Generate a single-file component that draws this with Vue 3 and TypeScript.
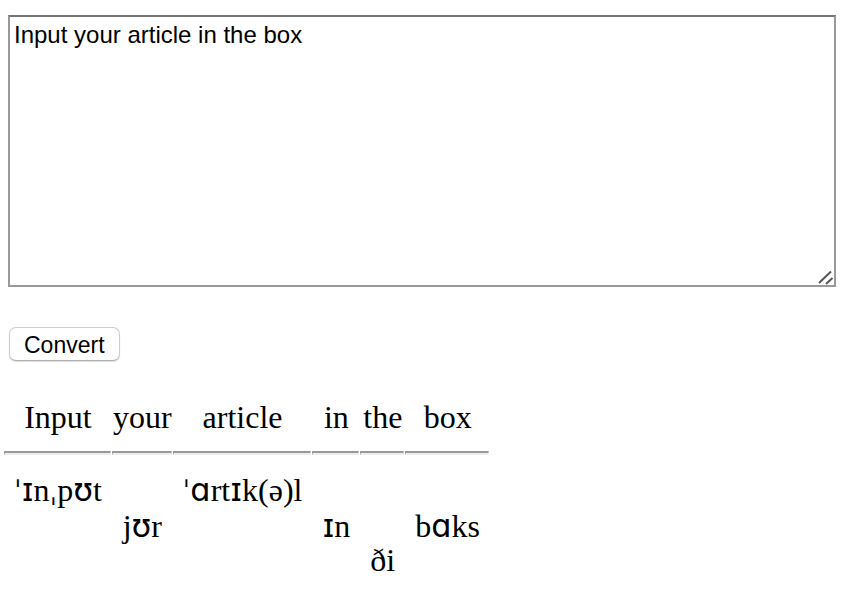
<script setup lang="ts">
import { computed, ref } from 'vue'

interface Entry {
  word: string
  ipa: string
  level: number
}

const article = ref('Input your article in the box')

const dictionary: Record<string, { ipa: string; level: number }> = {
  input: { ipa: 'ˈɪnˌpʊt', level: 0 },
  your: { ipa: 'jʊr', level: 1 },
  article: { ipa: 'ˈɑrtɪk(ə)l', level: 0 },
  in: { ipa: 'ɪn', level: 1 },
  the: { ipa: 'ði', level: 2 },
  box: { ipa: 'bɑks', level: 1 },
}

function convert(text: string): Entry[] {
  return text
    .split(/\s+/)
    .filter(Boolean)
    .map((word) => ({ word, ...(dictionary[word.toLowerCase()] ?? { ipa: word, level: 0 }) }))
}

const entries = ref<Entry[]>(convert(article.value))

// Phonetic letters and stress marks are set in a face of their own.
const columns = computed(() =>
  entries.value.map((e) => ({
    ...e,
    parts: e.ipa
      .split(/([ɪʊɑˈˌ])/)
      .filter(Boolean)
      .map((text) => ({
        text,
        symbol: /[ɪʊɑˈˌ]/.test(text),
        stress: /[ˈˌ]/.test(text),
      })),
  })),
)
</script>

<template>
  <main class="page">
    <form @submit.prevent="entries = convert(article)">
      <div class="field">
        <textarea v-model="article" class="article" aria-label="Article" spellcheck="false"></textarea>
        <svg class="grip" viewBox="0 0 16 16" aria-hidden="true">
          <path d="M1 14 13 2.500M8 15 14.500 9" />
        </svg>
      </div>
      <button class="convert" type="submit">Convert</button>
    </form>
    <table class="result">
      <thead>
        <tr>
          <th v-for="(c, i) in columns" :key="i" scope="col">
            <span class="word">{{ c.word }}</span>
            <hr />
          </th>
        </tr>
      </thead>
      <tbody>
        <tr>
          <td v-for="(c, i) in columns" :key="i" :class="'level-' + c.level">
            <span
              v-for="(p, j) in c.parts"
              :key="j"
              :class="{ symbol: p.symbol, stress: p.stress }"
            >{{ p.text }}</span>
          </td>
        </tr>
      </tbody>
    </table>
  </main>
</template>

<style>
body {
  background: #fff;
}
</style>

<style scoped>
.page {
  padding: 15px 14px 0 8px;
  color: #000;
  font-family: 'Liberation Serif', serif;
  font-size: 32px;
}
.field {
  position: relative;
}
.article {
  display: block;
  box-sizing: border-box;
  width: 100%;
  height: 272px;
  padding: 4px;
  border: 2px solid #999;
  border-top-color: #767676;
  border-radius: 0;
  outline: none;
  resize: none;
  background: #fff;
  color: #000;
  font: 24px/28px 'Liberation Sans', sans-serif;
}
.grip {
  position: absolute;
  right: 2px;
  bottom: 2px;
  width: 16px;
  height: 16px;
  fill: none;
  stroke: #555;
  stroke-width: 2;
}
.convert {
  display: block;
  height: 34px;
  margin: 40px 0 0 1px;
  padding: 1px 14px 0;
  border: 1px solid #ccc;
  border-bottom-color: #b0b0b0;
  border-radius: 7px;
  background: #fff;
  box-shadow: 0 1px 1px #ddd;
  color: #000;
  font: 23px/32px 'Liberation Sans', sans-serif;
}
.result {
  margin: 38px 0 0 -4px;
  border-collapse: collapse;
  line-height: 36px;
  text-align: center;
  white-space: nowrap;
}
th {
  padding: 0;
  font-weight: normal;
}
.word {
  display: block;
  padding: 0 1px;
}
hr {
  height: 0;
  margin: 16px 1px 0 0;
  border: 2px solid #eee;
  border-width: 2px 1px 2px 1px;
  border-top-color: #999;
  border-left-color: #999;
}
td {
  padding: 17px 10px 0;
  vertical-align: top;
}
.level-1 {
  padding-top: 53px;
}
.level-2 {
  padding-top: 87px;
}
.symbol {
  font-family: 'DejaVu Sans', sans-serif;
}
.stress {
  font-size: 28px;
}
</style>
